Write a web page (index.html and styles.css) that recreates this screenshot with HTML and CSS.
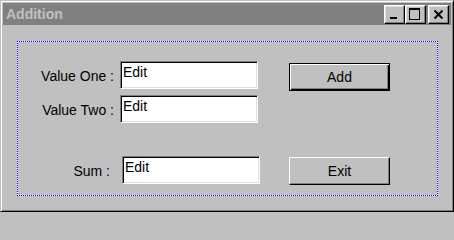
FILE: index.html
```html
<!DOCTYPE html>
<html>
<head>
<meta charset="utf-8">
<title>Addition</title>
<link rel="stylesheet" href="styles.css">
</head>
<body>
<div class="window">
  <div class="titlebar">
    <span class="title">Addition</span>
    <div class="caption-buttons">
      <span class="cap-btn">
        <svg class="glyph" width="21" height="19" viewBox="0 0 21 19" shape-rendering="crispEdges"><rect x="6" y="12" width="7" height="2" fill="#000"/></svg>
      </span>
      <span class="cap-btn">
        <svg class="glyph" width="21" height="19" viewBox="0 0 21 19" shape-rendering="crispEdges"><rect x="4" y="3" width="11" height="2" fill="#000"/><rect x="4" y="3" width="1" height="12" fill="#000"/><rect x="14" y="3" width="1" height="12" fill="#000"/><rect x="4" y="14" width="11" height="1" fill="#000"/></svg>
      </span>
      <span class="cap-btn cap-close">
        <svg class="glyph" width="21" height="19" viewBox="0 0 21 19"><path d="M6.5 5.5 L14.5 13.5 M14.5 5.5 L6.5 13.5" stroke="#000" stroke-width="2" fill="none"/></svg>
      </span>
    </div>
  </div>
  <div class="client">
    <div class="frame">
      <div class="row">
        <span class="label">Value One :</span>
        <div class="edit">Edit</div>
        <div class="btn btn-default">Add</div>
      </div>
      <div class="row">
        <span class="label">Value Two :</span>
        <div class="edit">Edit</div>
      </div>
      <div class="row row-sum">
        <span class="label">Sum :</span>
        <div class="edit">Edit</div>
        <div class="btn">Exit</div>
      </div>
    </div>
  </div>
</div>
</body>
</html>
```
FILE: styles.css
```css
html, body {
  margin: 0;
  background: #c0c0c0;
}

body {
  font-family: "Liberation Sans", Arial, sans-serif;
  font-size: 14px;
  color: #000;
}

.window {
  box-sizing: border-box;
  width: 454px;
  height: 212px;
  background: #c0c0c0;
  border: 1px solid;
  border-color: #c0c0c0 #000 #000 #c0c0c0;
  box-shadow: inset 1px 1px #fff, inset -1px -1px #808080;
  padding: 2px;
  display: flex;
  flex-direction: column;
}

.titlebar {
  height: 22px;
  flex: none;
  background: #808080;
  display: flex;
  align-items: flex-start;
  padding-left: 3px;
  padding-right: 2px;
}

.title {
  flex: 1;
  color: #c0c0c0;
  font-weight: bold;
  line-height: 22px;
}

.caption-buttons {
  display: flex;
  margin-top: 2px;
}

.cap-btn {
  box-sizing: border-box;
  width: 21px;
  height: 19px;
  background: #c0c0c0;
  border: 1px solid;
  border-color: #fff #000 #000 #fff;
  box-shadow: inset -1px -1px #808080, inset 1px 1px #dfdfdf;
}

.cap-close {
  margin-left: 2px;
}

.glyph {
  display: block;
  margin: -1px;
}

.client {
  flex: 1;
}

.frame {
  position: relative;
  box-sizing: border-box;
  width: 421px;
  height: 155px;
  margin: 16px 0 0 14px;
  padding: 20px 1px 1px 1px;
}

.frame::before {
  content: "";
  position: absolute;
  inset: 0;
  pointer-events: none;
  background:
    repeating-linear-gradient(90deg, #0000ff 0 1px, #ffffff 1px 2px) left top / 100% 1px no-repeat,
    repeating-linear-gradient(90deg, #0000ff 0 1px, #ffffff 1px 2px) left bottom / 100% 1px no-repeat,
    repeating-linear-gradient(180deg, #0000ff 0 1px, #ffffff 1px 2px) left top / 1px 100% no-repeat,
    repeating-linear-gradient(180deg, #0000ff 0 1px, #ffffff 1px 2px) right top / 1px 100% no-repeat;
}

.row {
  display: flex;
  align-items: flex-start;
  height: 28px;
}

.row + .row {
  margin-top: 6px;
}

.row + .row.row-sum {
  margin-top: 33px;
}

.label {
  box-sizing: border-box;
  width: 102px;
  padding-right: 6px;
  padding-top: 1px;
  text-align: right;
  line-height: 28px;
  white-space: nowrap;
}

.row-sum .label {
  width: 104px;
  padding-right: 12px;
}

.edit {
  box-sizing: border-box;
  width: 138px;
  height: 28px;
  background: #fff;
  border: 1px solid;
  border-color: #808080 #fff #fff #808080;
  box-shadow: inset 1px 1px #000, inset -1px -1px #dfdfdf;
  padding: 2px 2px;
  line-height: 16px;
}

.btn {
  box-sizing: border-box;
  width: 101px;
  height: 28px;
  margin-left: 31px;
  margin-top: 1px;
  background: #c0c0c0;
  border: 1px solid;
  border-color: #fff #000 #000 #fff;
  box-shadow: inset -1px -1px #808080;
  text-align: center;
  line-height: 26px;
}

.row-sum .btn {
  margin-left: 29px;
}

.btn-default {
  margin-top: 2px;
  border-color: #000;
  box-shadow: inset 1px 1px #fff, inset -1px -1px #000, inset -2px -2px #808080;
}
```
